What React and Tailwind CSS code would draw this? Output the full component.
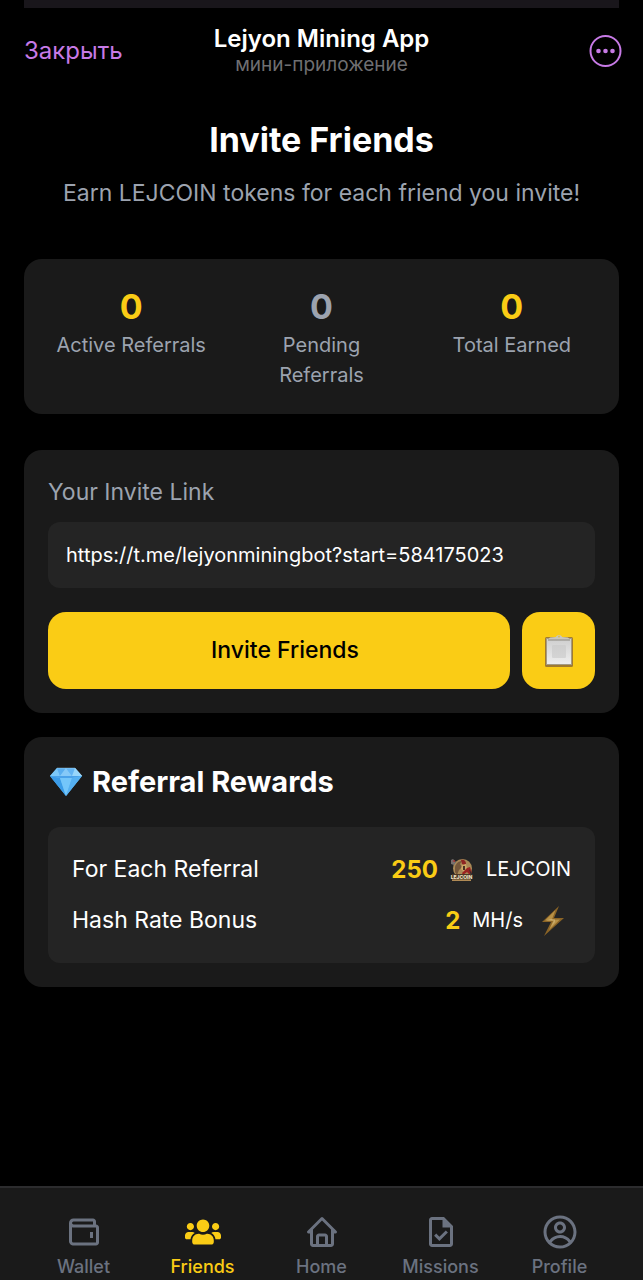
import React, { useState } from 'react';
import { BiHome, BiWallet } from 'react-icons/bi';
import { CgProfile } from 'react-icons/cg';
import { FaUsers } from 'react-icons/fa';
import { MdOutlineTask } from 'react-icons/md';

const inviteLink = 'https://t.me/lejyonminingbot?start=584175023';

const stats = [
  { label: 'Active Referrals', value: 0, color: 'text-[#facc15]' },
  { label: 'Pending Referrals', value: 0, color: 'text-[#9ca3af]' },
  { label: 'Total Earned', value: 0, color: 'text-[#facc15]' },
];

const tabs = [
  { name: 'Wallet', Icon: BiWallet },
  { name: 'Friends', Icon: FaUsers },
  { name: 'Home', Icon: BiHome },
  { name: 'Missions', Icon: MdOutlineTask },
  { name: 'Profile', Icon: CgProfile },
];

const DiamondIcon = () => (
  <svg viewBox="0 0 36 32" className="w-9 h-8" aria-hidden="true">
    <path d="M9 2 L27 2 L34 10 L18 30 L2 10 Z" fill="#5db8f5" />
    <path d="M9 2 L12 10 L2 10 Z" fill="#7cc8f8" />
    <path d="M9 2 L18 2 L12 10 Z" fill="#5aaef0" />
    <path d="M18 2 L24 10 L12 10 Z" fill="#86c9f8" />
    <path d="M18 2 L27 2 L24 10 Z" fill="#63b4f3" />
    <path d="M27 2 L34 10 L24 10 Z" fill="#97d6fb" />
    <path d="M2 10 L12 12 L18 30 Z" fill="#3b9ce8" />
    <path d="M2 10 L34 10 L24 12 L12 12 Z" fill="#4ba2ea" />
    <path d="M12 12 L24 12 L18 30 Z" fill="#74c6fa" />
    <path d="M24 12 L34 10 L18 30 Z" fill="#55b0f1" />
    <path d="M9 2 L27 2 L34 10" fill="none" stroke="#c5ebff" strokeWidth="0.5" opacity="0.7" />
  </svg>
);

const ClipboardIcon = () => (
  <svg viewBox="0 0 30 34" className="w-[30px] h-[34px]" aria-hidden="true">
    <defs>
      <linearGradient id="paper" x1="0" y1="0" x2="0" y2="1">
        <stop offset="0" stopColor="#cfcfcf" />
        <stop offset="1" stopColor="#eeeeee" />
      </linearGradient>
    </defs>
    <rect x="1" y="3" width="28" height="30" rx="1.5" fill="#a07a30" />
    <rect x="2" y="4" width="26" height="27" fill="#a39a84" />
    <rect x="3" y="5" width="24" height="25" fill="url(#paper)" />
    <rect x="8" y="11" width="14" height="13" rx="1" fill="#c8c8c8" opacity="0.6" />
    <path d="M4 5.500 L6 3.500 L12 3 C12 0.500 18 0.500 18 3 L24 3.500 L26 5.500 Z" fill="#c9c7bd" />
    <path d="M4 5.500 L26 5.500 L26 6.500 L4 6.500 Z" fill="#8a867c" />
    <circle cx="15" cy="2.800" r="0.800" fill="#e3b91e" />
  </svg>
);

const CoinIcon = () => (
  <svg viewBox="0 0 24 24" className="w-6 h-6" aria-hidden="true">
    <circle cx="12.500" cy="10.500" r="9.500" fill="#a98957" />
    <path d="M5 9 C6 5 9 3 12 3 L10 6 L12 9 L9 12 L7 17 L5 14 Z" fill="#75573a" />
    <path d="M11 2 C14 1 16 3 16 6 L14 7 L12 6 Z" fill="#8f2422" />
    <path d="M12 7 L16 6 L17 11 L14 14 L11 11 Z" fill="#d0a566" />
    <path d="M13 8 L15 8 L15 12 L13 12 Z" fill="#4b3324" />
    <path d="M17 10 L20 9 L22 15 L20 17 L17 14 L13 17 L12 15 Z" fill="#9c2321" />
    <path d="M19 11 L23 17 L21 18 Z" fill="#34302f" />
    <path d="M1 2 L3 1 L6 4 L4 7 L1 6 Z" fill="#77706e" />
    <path d="M2 3 L5 2 L5 4 Z" fill="#a82d2b" />
    <rect x="2" y="16" width="19" height="6" fill="#4b3825" />
    <text x="11.500" y="21" textAnchor="middle" fontSize="5" fontWeight="800" fill="#f0e2c4">LEJCOIN</text>
    <rect x="2" y="21.500" width="19" height="1.500" fill="#b08a55" />
  </svg>
);

const BoltIcon = () => (
  <svg viewBox="0 0 24 32" className="w-6 h-8" aria-hidden="true">
    <path d="M18 1 L1 17 L10 17 L3 31 L23 13 L13 13 Z" fill="#8b6426" />
    <path d="M14.500 5 L4 15.500 L12 16 L8 25 L19 14.500 L11 14.500 Z" fill="#b89146" />
    <path d="M5 15.500 L13 15.500 L10 22 L14 17 L14 14.500 L10 14 Z" fill="#d1b77b" opacity="0.7" />
  </svg>
);

const Header = () => (
  <header>
    <div className="mx-6 h-2 bg-[#19161b]" />
    <div className="grid grid-cols-[1fr_auto_1fr] items-center px-6 pt-[17px]">
      <button className="justify-self-start text-2xl text-[#c77ae6]">Закрыть</button>
      <div className="text-center">
        <h1 className="text-2xl leading-7 font-semibold">Lejyon Mining App</h1>
        <p className="text-[19px] leading-6 text-[#6f6f72]">мини-приложение</p>
      </div>
      <button aria-label="More" className="justify-self-end -mr-1 text-[#c77ae6]">
        <svg viewBox="0 0 34 34" className="w-[34px] h-[34px]">
          <circle cx="16.500" cy="17" r="15" fill="none" stroke="currentColor" strokeWidth="2" />
          <circle cx="9.500" cy="17" r="2.300" fill="currentColor" />
          <circle cx="16.500" cy="17" r="2.300" fill="currentColor" />
          <circle cx="23.500" cy="17" r="2.300" fill="currentColor" />
        </svg>
      </button>
    </div>
  </header>
);

const BottomNav = ({ active, onChange }) => (
  <nav className="mt-auto flex justify-around border-t-2 border-[#2c2c2e] bg-[#1a1a1a] px-6 pt-[26px]">
    {tabs.map(({ name, Icon }) => (
      <button
        key={name}
        onClick={() => onChange(name)}
        className={`flex flex-1 flex-col items-center gap-1 ${active === name ? 'text-[#facc15]' : 'text-[#6b7280]'}`}
      >
        <Icon className="w-9 h-9" />
        <span className="text-lg leading-[26px] font-medium">{name}</span>
      </button>
    ))}
  </nav>
);

const App = () => {
  const [activeTab, setActiveTab] = useState('Friends');

  const copyLink = () => {
    navigator.clipboard?.writeText(inviteLink);
  };

  return (
    <div className="flex min-h-screen flex-col bg-black text-white font-['Inter','Noto_Sans',sans-serif]">
      <Header />

      <main className="px-6 pb-6">
        {/* Title */}
        <div className="pt-10 text-center">
          <h2 className="text-[34px] leading-[46px] font-bold">Invite Friends</h2>
          <p className="mt-3 text-[23px] leading-9 text-[#9ca3af]">Earn LEJCOIN tokens for each friend you invite!</p>
        </div>

        {/* Stats */}
        <section className="mt-12 grid grid-cols-3 gap-6 rounded-[18px] bg-[#1a1a1a] p-6 text-center">
          {stats.map((stat) => (
            <div key={stat.label} className="px-1">
              <div className={`text-[34px] leading-[47px] font-bold ${stat.color}`}>{stat.value}</div>
              <div className="text-xl leading-[30px] text-[#9ca3af]">{stat.label}</div>
            </div>
          ))}
        </section>

        {/* Invite link */}
        <section className="mt-9 rounded-[18px] bg-[#1a1a1a] p-6">
          <label htmlFor="invite-link" className="block text-[23px] leading-9 text-[#9ca3af]">Your Invite Link</label>
          <input
            id="invite-link"
            readOnly
            value={inviteLink}
            className="mt-3 h-[66px] w-full rounded-xl bg-[#242424] px-[18px] text-xl outline-none"
          />
          <div className="mt-6 flex gap-3">
            <button className="h-[77px] flex-1 rounded-[18px] bg-[#facc15] pl-3 text-[23px] font-medium text-black">Invite Friends</button>
            <button
              aria-label="Copy link"
              onClick={copyLink}
              className="flex h-[77px] w-[73px] items-center justify-center rounded-[18px] bg-[#facc15]"
            >
              <ClipboardIcon />
            </button>
          </div>
        </section>

        {/* Rewards */}
        <section className="mt-6 rounded-[18px] bg-[#1a1a1a] p-6">
          <h3 className="flex items-center gap-2 text-[29px] leading-[42px] font-bold">
            <DiamondIcon />
            Referral Rewards
          </h3>
          <div className="mt-6 flex flex-col gap-3.5 rounded-xl bg-[#242424] p-6">
            <div className="flex items-center justify-between leading-[37px]">
              <span className="text-[23px]">For Each Referral</span>
              <span className="flex items-center gap-3">
                <span className="text-2xl leading-[37px] font-bold text-[#facc15]">250</span>
                <CoinIcon />
                <span className="text-xl leading-[37px]">LEJCOIN</span>
              </span>
            </div>
            <div className="flex items-center justify-between leading-[37px]">
              <span className="text-[23px]">Hash Rate Bonus</span>
              <span className="flex items-center gap-3">
                <span className="text-2xl leading-[37px] font-bold text-[#facc15]">2</span>
                <span className="text-xl leading-[37px]">MH/s</span>
                <span className="px-1.5"><BoltIcon /></span>
              </span>
            </div>
          </div>
        </section>
      </main>

      <BottomNav active={activeTab} onChange={setActiveTab} />
    </div>
  );
};

export default App;
